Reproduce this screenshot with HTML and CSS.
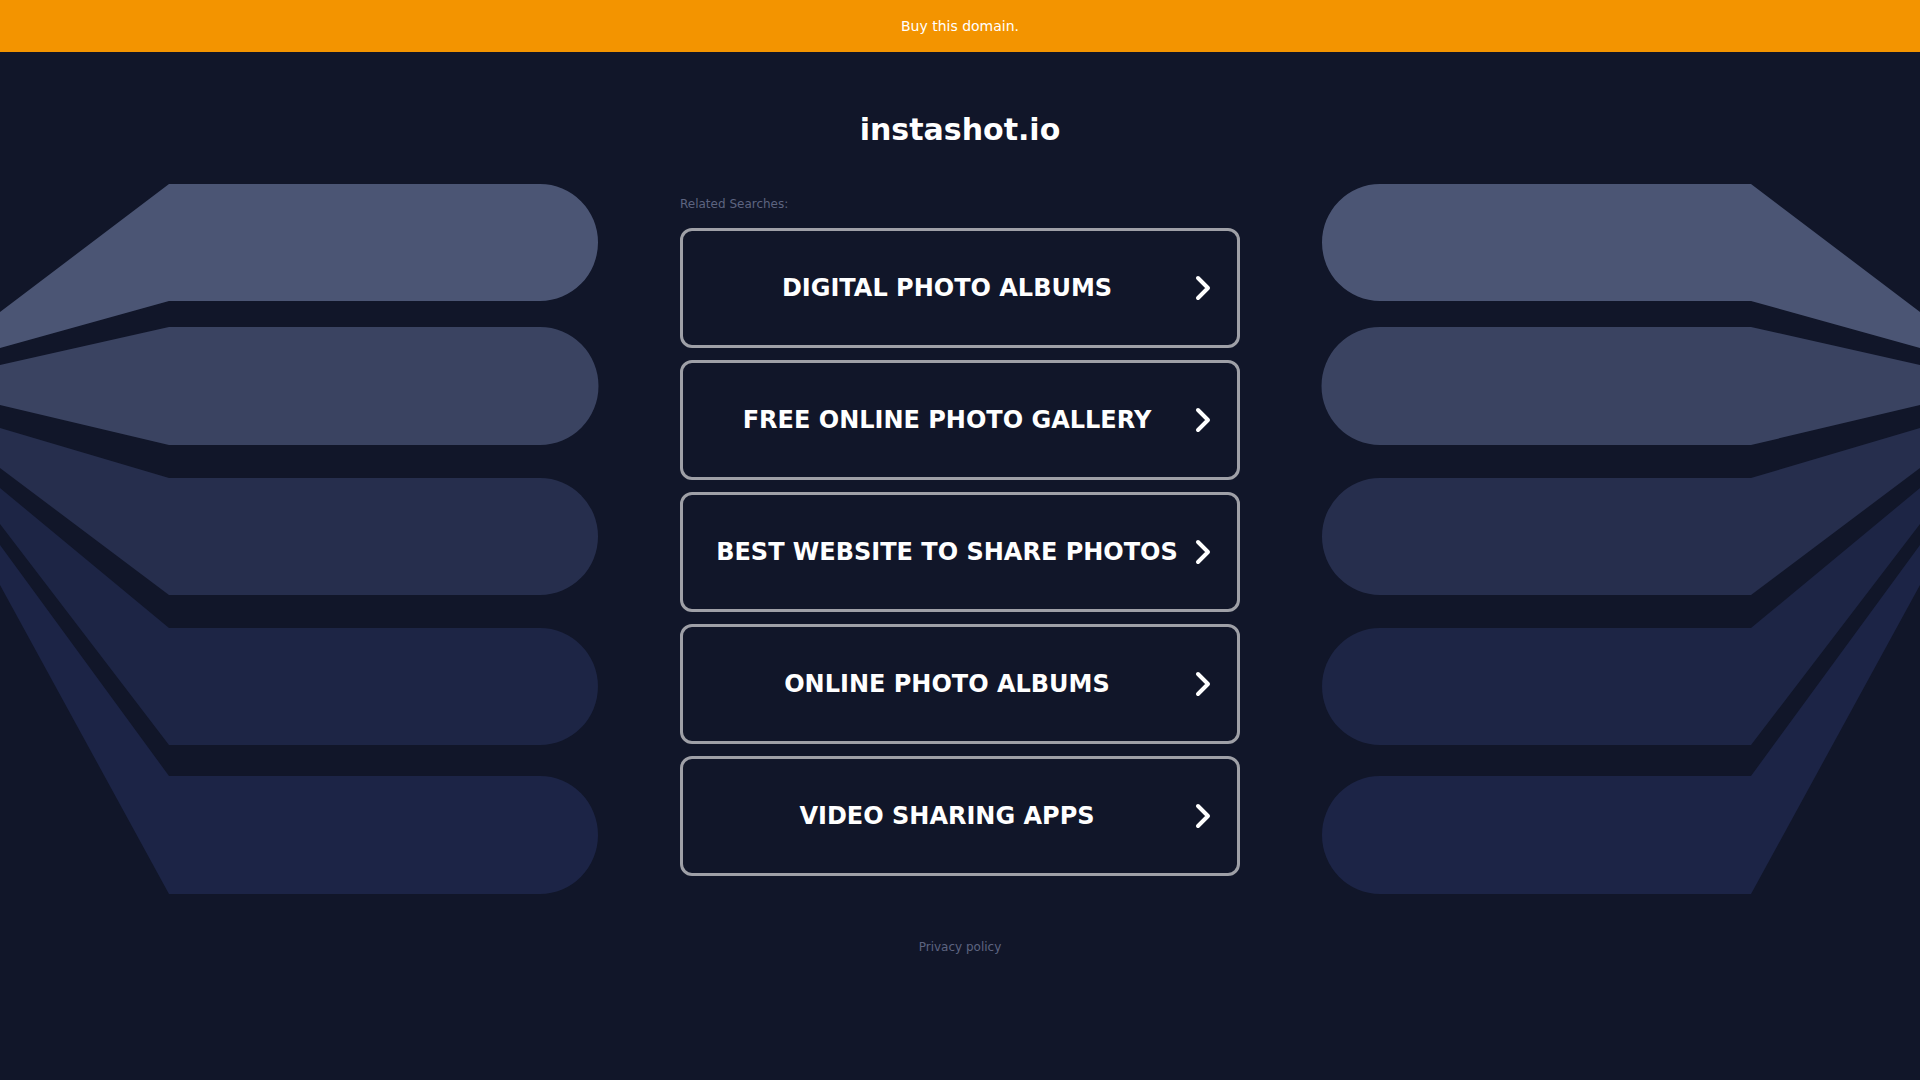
FILE: index.html
```html
<!DOCTYPE html>
<html lang="en">

<head>
  <meta charset="UTF-8">
  <meta name="viewport" content="width=device-width, initial-scale=1.0">
  <title>instashot.io</title>
  <link rel="stylesheet" href="styles.css">
</head>

<body>
  <div class="topbar"><a href="#">Buy this domain.</a></div>

  <div class="stage">
    <div class="art art-left">
      <svg width="680" height="710" viewBox="0 0 680 710">
        <path fill="#4b5574" d="M0,128 L169,0 L540,0 A58,58.5 0 0 1 540,117 L169,117 L0,164 Z" />
        <path fill="#3a4361" d="M0,181 L169,143 L540,143 A58,58.5 0 0 1 540,261 L169,261 L0,221 Z" />
        <path fill="#262e4d" d="M0,244 L169,294 L540,294 A58,58.5 0 0 1 540,411 L169,411 L0,284 Z" />
        <path fill="#1d2545" d="M0,304 L169,444 L540,444 A58,58.5 0 0 1 540,561 L169,561 L0,340 Z" />
        <path fill="#1c2446" d="M0,361 L169,592 L540,592 A58,59 0 0 1 540,710 L169,710 L0,401 Z" />
      </svg>
    </div>

    <div class="content">
      <h1 class="domain">instashot.io</h1>
      <p class="related">Related Searches:</p>
      <div class="links">
        <a class="link" href="#"><span>DIGITAL PHOTO ALBUMS</span>
          <svg class="chev" width="16" height="26" viewBox="0 0 16 26"><path d="M3,3 L13,13 L3,23" /></svg></a>
        <a class="link" href="#"><span>FREE ONLINE PHOTO GALLERY</span>
          <svg class="chev" width="16" height="26" viewBox="0 0 16 26"><path d="M3,3 L13,13 L3,23" /></svg></a>
        <a class="link" href="#"><span>BEST WEBSITE TO SHARE PHOTOS</span>
          <svg class="chev" width="16" height="26" viewBox="0 0 16 26"><path d="M3,3 L13,13 L3,23" /></svg></a>
        <a class="link" href="#"><span>ONLINE PHOTO ALBUMS</span>
          <svg class="chev" width="16" height="26" viewBox="0 0 16 26"><path d="M3,3 L13,13 L3,23" /></svg></a>
        <a class="link" href="#"><span>VIDEO SHARING APPS</span>
          <svg class="chev" width="16" height="26" viewBox="0 0 16 26"><path d="M3,3 L13,13 L3,23" /></svg></a>
      </div>
    </div>

    <div class="art art-right">
      <svg width="680" height="710" viewBox="0 0 680 710">
        <path fill="#4b5574" d="M0,128 L169,0 L540,0 A58,58.5 0 0 1 540,117 L169,117 L0,164 Z" />
        <path fill="#3a4361" d="M0,181 L169,143 L540,143 A58,58.5 0 0 1 540,261 L169,261 L0,221 Z" />
        <path fill="#262e4d" d="M0,244 L169,294 L540,294 A58,58.5 0 0 1 540,411 L169,411 L0,284 Z" />
        <path fill="#1d2545" d="M0,304 L169,444 L540,444 A58,58.5 0 0 1 540,561 L169,561 L0,340 Z" />
        <path fill="#1c2446" d="M0,361 L169,592 L540,592 A58,59 0 0 1 540,710 L169,710 L0,401 Z" />
      </svg>
    </div>
  </div>

  <div class="footer"><a href="#">Privacy policy</a></div>
</body>

</html>
```

FILE: styles.css
```css
body {
  margin: 0;
  background-color: #111629;
  font-family: "DejaVu Sans", sans-serif;
  color: #fff;
}

a {
  text-decoration: none;
}

.topbar {
  height: 52px;
  line-height: 52px;
  background-color: #f39400;
  text-align: center;
  font-size: 14px;
}

.topbar a {
  color: #fff;
}

.stage {
  display: grid;
  grid-template-columns: 1fr 560px 1fr;
  align-items: start;
}

.art {
  margin-top: 132px;
  height: 710px;
}

.art svg {
  display: block;
}

.art-right svg {
  transform: scaleX(-1);
}

.domain {
  margin: 60px 0 0;
  font-size: 30px;
  line-height: 36px;
  text-align: center;
  font-weight: bold;
}

.related {
  margin: 48px 0 16px;
  font-size: 12px;
  line-height: 16px;
  color: #5d6480;
}

.links {
  display: flex;
  flex-direction: column;
  gap: 12px;
}

.link {
  display: flex;
  align-items: center;
  gap: 8px;
  height: 120px;
  box-sizing: border-box;
  padding: 0 26px 0 24px;
  border: 3px solid #9fa0a7;
  border-radius: 12px;
  color: #fff;
  font-size: 24px;
  font-weight: bold;
}

.link span {
  flex: 1;
  text-align: center;
}

.chev path {
  fill: none;
  stroke: #fff;
  stroke-width: 4;
  stroke-linecap: round;
  stroke-linejoin: round;
}

.footer {
  margin-top: 45px;
  text-align: center;
  font-size: 12px;
  line-height: 16px;
}

.footer a {
  color: #5d6480;
}
```
